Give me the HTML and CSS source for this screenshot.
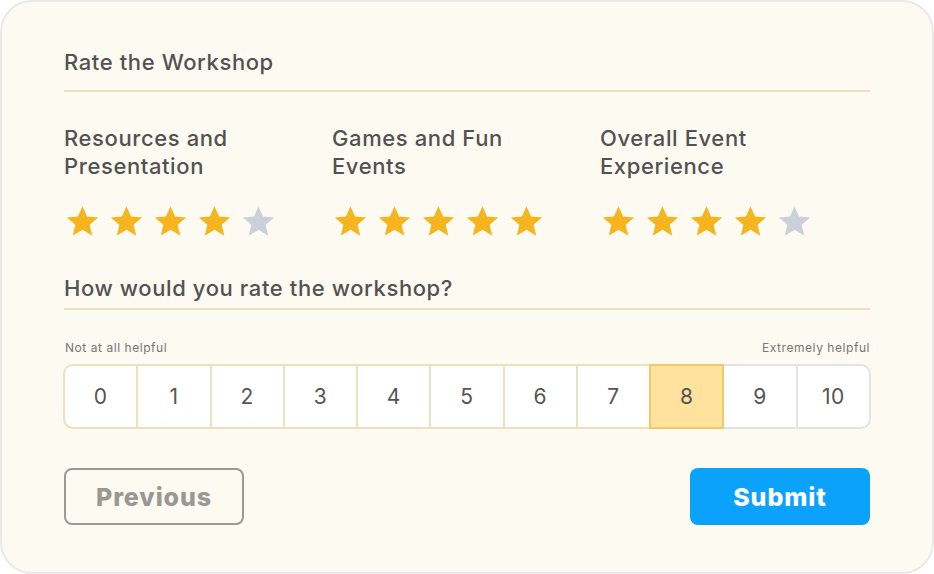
FILE: index.html
```html
<!DOCTYPE html>
<html lang="en">
<head>
<meta charset="utf-8">
<title>Rate the Workshop</title>
<link rel="stylesheet" href="styles.css">
</head>
<body>
<div class="card">
  <h1 class="section-title">Rate the Workshop</h1>
  <div class="categories">
    <div class="category">
      <div class="cat-title">Resources and<br>Presentation</div>
      <div class="stars">
        <svg class="star on" viewBox="0 0 24 24"><path d="M12 1.5l3.1 7.1 7.6.6-5.8 5 1.8 7.5L12 17.7l-6.7 4 1.8-7.5-5.8-5 7.6-.6z"/></svg>
        <svg class="star on" viewBox="0 0 24 24"><path d="M12 1.5l3.1 7.1 7.6.6-5.8 5 1.8 7.5L12 17.7l-6.7 4 1.8-7.5-5.8-5 7.6-.6z"/></svg>
        <svg class="star on" viewBox="0 0 24 24"><path d="M12 1.5l3.1 7.1 7.6.6-5.8 5 1.8 7.5L12 17.7l-6.7 4 1.8-7.5-5.8-5 7.6-.6z"/></svg>
        <svg class="star on" viewBox="0 0 24 24"><path d="M12 1.5l3.1 7.1 7.6.6-5.8 5 1.8 7.5L12 17.7l-6.7 4 1.8-7.5-5.8-5 7.6-.6z"/></svg>
        <svg class="star off" viewBox="0 0 24 24"><path d="M12 1.5l3.1 7.1 7.6.6-5.8 5 1.8 7.5L12 17.7l-6.7 4 1.8-7.5-5.8-5 7.6-.6z"/></svg>
      </div>
    </div>
    <div class="category">
      <div class="cat-title">Games and Fun<br>Events</div>
      <div class="stars">
        <svg class="star on" viewBox="0 0 24 24"><path d="M12 1.5l3.1 7.1 7.6.6-5.8 5 1.8 7.5L12 17.7l-6.7 4 1.8-7.5-5.8-5 7.6-.6z"/></svg>
        <svg class="star on" viewBox="0 0 24 24"><path d="M12 1.5l3.1 7.1 7.6.6-5.8 5 1.8 7.5L12 17.7l-6.7 4 1.8-7.5-5.8-5 7.6-.6z"/></svg>
        <svg class="star on" viewBox="0 0 24 24"><path d="M12 1.5l3.1 7.1 7.6.6-5.8 5 1.8 7.5L12 17.7l-6.7 4 1.8-7.5-5.8-5 7.6-.6z"/></svg>
        <svg class="star on" viewBox="0 0 24 24"><path d="M12 1.5l3.1 7.1 7.6.6-5.8 5 1.8 7.5L12 17.7l-6.7 4 1.8-7.5-5.8-5 7.6-.6z"/></svg>
        <svg class="star on" viewBox="0 0 24 24"><path d="M12 1.5l3.1 7.1 7.6.6-5.8 5 1.8 7.5L12 17.7l-6.7 4 1.8-7.5-5.8-5 7.6-.6z"/></svg>
      </div>
    </div>
    <div class="category">
      <div class="cat-title">Overall Event<br>Experience</div>
      <div class="stars">
        <svg class="star on" viewBox="0 0 24 24"><path d="M12 1.5l3.1 7.1 7.6.6-5.8 5 1.8 7.5L12 17.7l-6.7 4 1.8-7.5-5.8-5 7.6-.6z"/></svg>
        <svg class="star on" viewBox="0 0 24 24"><path d="M12 1.5l3.1 7.1 7.6.6-5.8 5 1.8 7.5L12 17.7l-6.7 4 1.8-7.5-5.8-5 7.6-.6z"/></svg>
        <svg class="star on" viewBox="0 0 24 24"><path d="M12 1.5l3.1 7.1 7.6.6-5.8 5 1.8 7.5L12 17.7l-6.7 4 1.8-7.5-5.8-5 7.6-.6z"/></svg>
        <svg class="star on" viewBox="0 0 24 24"><path d="M12 1.5l3.1 7.1 7.6.6-5.8 5 1.8 7.5L12 17.7l-6.7 4 1.8-7.5-5.8-5 7.6-.6z"/></svg>
        <svg class="star off" viewBox="0 0 24 24"><path d="M12 1.5l3.1 7.1 7.6.6-5.8 5 1.8 7.5L12 17.7l-6.7 4 1.8-7.5-5.8-5 7.6-.6z"/></svg>
      </div>
    </div>
  </div>

  <h2 class="section-title question">How would you rate the workshop?</h2>
  <div class="scale-labels">
    <span>Not at all helpful</span>
    <span>Extremely helpful</span>
  </div>
  <div class="scale">
    <div class="cell">0</div>
    <div class="cell">1</div>
    <div class="cell">2</div>
    <div class="cell">3</div>
    <div class="cell">4</div>
    <div class="cell">5</div>
    <div class="cell">6</div>
    <div class="cell">7</div>
    <div class="cell selected">8</div>
    <div class="cell cool after-selected">9</div>
    <div class="cell cool last">10</div>
  </div>

  <div class="actions">
    <button class="btn btn-prev">Previous</button>
    <button class="btn btn-submit">Submit</button>
  </div>
</div>
</body>
</html>
```

FILE: styles.css
```css
* { box-sizing: border-box; }

html, body {
  margin: 0;
  padding: 0;
  background: #ffffff;
}

body {
  font-family: "Inter", "Open Sans", sans-serif;
  color: #545454;
}

.card {
  width: 934px;
  height: 574px;
  border: 2px solid #e9e9e9;
  border-radius: 32px;
  background: #fdfaf1;
  padding: 46px 62px 0 62px;
}

.section-title {
  margin: 0;
  font-size: 22px;
  font-weight: 500;
  line-height: 28px;
  color: #525252;
  padding-bottom: 14px;
  border-bottom: 2px solid #ebdfbd;
  letter-spacing: 0.6px;
}

.categories {
  display: grid;
  grid-template-columns: 268px 268px 1fr;
  margin-top: 32px;
}

.cat-title {
  font-size: 22px;
  font-weight: 500;
  line-height: 28px;
  letter-spacing: 0.6px;
  color: #525252;
}

.stars {
  display: flex;
  gap: 9px;
  margin-top: 24px;
  padding-left: 1px;
}

.star {
  width: 35px;
  height: 35px;
  display: block;
}

.star.on { fill: #f6b51f; }
.star.off { fill: #cbd0da; }

.question {
  margin-top: 35px;
  padding-bottom: 6px;
}

.scale-labels {
  display: flex;
  justify-content: space-between;
  margin-top: 31px;
  font-size: 12px;
  line-height: 14px;
  color: #767676;
  padding-left: 1px;
  letter-spacing: 0.55px;
}

.scale {
  display: flex;
  margin-top: 9px;
  margin-left: -1px;
  margin-right: -1px;
  height: 65px;
}

.cell {
  flex: 1;
  display: flex;
  align-items: center;
  justify-content: center;
  background: #ffffff;
  border-top: 2px solid #ece0c0;
  border-bottom: 2px solid #ece0c0;
  border-left: 2px solid #ece0c0;
  font-size: 21px;
  color: #555555;
  letter-spacing: 0.5px;
}

.cell:first-child {
  border-radius: 10px 0 0 10px;
}

.cell.selected {
  background: #fee29d;
  border-color: #f0c96b;
  border-right: 2px solid #f0c96b;
}

.cell.cool {
  border-color: #e3e3e3;
}

.cell.after-selected {
  border-left: none;
}

.cell.last {
  border-right: 2px solid #e3e3e3;
  border-radius: 0 10px 10px 0;
}

.actions {
  display: flex;
  justify-content: space-between;
  margin-top: 39px;
}

.btn {
  width: 180px;
  height: 57px;
  border-radius: 8px;
  font-family: "Inter", "Open Sans", sans-serif;
  font-size: 25px;
  font-weight: 800;
  letter-spacing: 0.9px;
  cursor: pointer;
}

.btn-prev {
  background: transparent;
  border: 2px solid #9c9994;
  color: #9a9894;
}

.btn-submit {
  background: #0aa2fb;
  border: none;
  color: #ffffff;
}
```
